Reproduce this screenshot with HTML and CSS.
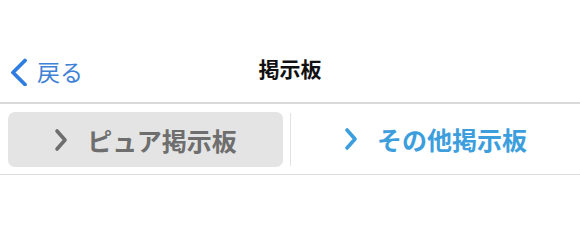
FILE: index.html
```html
<!DOCTYPE html>
<html lang="ja">
<head>
<meta charset="utf-8">
<link rel="stylesheet" href="styles.css">
</head>
<body>
<header class="navbar">
  <a class="back">
    <svg class="back-icon" width="18" height="28" viewBox="0 0 18 28"><path d="M15 2.5 L3 14.5 L15 26.5" fill="none" stroke="#2f7de1" stroke-width="3.8" stroke-linecap="round" stroke-linejoin="round"/></svg>
    <span class="back-label">戻る</span>
  </a>
  <h1 class="title">掲示板</h1>
</header>
<nav class="segments">
  <div class="seg seg-left">
    <div class="seg-btn active">
      <svg class="chev" width="14" height="24" viewBox="0 0 14 24"><path d="M3 3 L11 12 L3 21" fill="none" stroke="currentColor" stroke-width="3.6" stroke-linecap="round" stroke-linejoin="round"/></svg>
      <span>ピュア掲示板</span>
    </div>
  </div>
  <div class="divider"></div>
  <div class="seg seg-right">
    <div class="seg-btn link">
      <svg class="chev" width="14" height="24" viewBox="0 0 14 24"><path d="M3 3 L11 12 L3 21" fill="none" stroke="currentColor" stroke-width="3.6" stroke-linecap="round" stroke-linejoin="round"/></svg>
      <span>その他掲示板</span>
    </div>
  </div>
</nav>
</body>
</html>
```
FILE: styles.css
```css
html, body {
  margin: 0;
  padding: 0;
  background: #ffffff;
  font-family: "Noto Sans CJK JP", "Noto Sans", sans-serif;
}
.navbar {
  position: relative;
  border-bottom: 2px solid #d9d9d9;
  display: flex;
  align-items: center;
  justify-content: center;
  box-sizing: border-box;
  padding-top: 38px;
  height: 104px;
}
.back {
  position: absolute;
  left: 10px;
  top: 58px;
  display: flex;
  align-items: center;
  gap: 9px;
  color: #3f82d6;
}
.back-label {
  font-size: 23px;
  line-height: 28px;
  margin-top: -3px;
}
.title {
  margin: 0;
  font-size: 21px;
  font-weight: 700;
  color: #111;
  line-height: 28px;
  margin-top: -4px;
}
.segments {
  display: grid;
  grid-template-columns: 290px 1px 1fr;
  height: 71px;
  border-bottom: 1px solid #dedede;
  box-sizing: border-box;
}
.seg {
  display: flex;
  align-items: stretch;
}
.seg-left {
  padding: 8px 7px 7px 8px;
}
.divider {
  background: #e2e2e2;
  margin: 9px 0 8px;
}
.seg-btn {
  flex: 1;
  display: flex;
  align-items: center;
  justify-content: center;
  gap: 19px;
  font-size: 25px;
  font-weight: 700;
  border-radius: 7px;
}
.seg-btn.active {
  background: #e4e4e4;
  color: #6e6e6e;
}
.seg-btn.link {
  color: #3d9ede;
}
.chev {
  display: block;
}
```
